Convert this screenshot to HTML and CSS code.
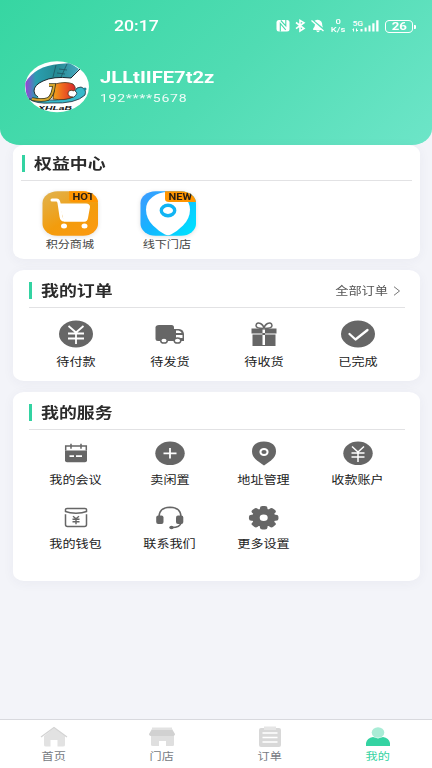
FILE: index.html
```html
<!DOCTYPE html>
<html lang="zh-CN">
<head>
<meta charset="utf-8">
<meta name="viewport" content="width=device-width, initial-scale=1">
<title>我的</title>
<link rel="stylesheet" href="styles.css">
</head>
<body>
<div class="app">
  <header class="hero">
    <div class="status">
      <span class="clock">20:17</span>
      <div class="indicators">
        <svg width="50" height="18" viewBox="275 17 50 18">
          <g fill="#fff">
            <rect x="276.500" y="20" width="13" height="11.500" rx="2.500"/>
            <path d="M313.300 28.300c1.500-1 1.500-2.800 1.800-4.500l7 6.200h-9zM314.500 20.800q4-2.600 6.800.7 1 1.500 1 4.300l.8 2zM316 30.500h4q-1 1.700-2 1.700t-2-1.700z"/>
          </g>
          <path d="M280.300 31.500v-8l5.400 6.300M280.800 20.500l5 5.300V20" fill="none" stroke="#45d9ab" stroke-width="1.100"/>
          <g fill="none" stroke="#fff">
            <path stroke-width="1.600" d="M296 22.500l8 6-4 2.500V20.300l4 2.400-8 6"/>
            <path stroke-width="1.400" d="M311.500 20.500l12 10.500"/>
          </g>
        </svg>
        <div class="speed"><span>0</span><span>K/s</span></div>
        <svg class="signal" width="28" height="18" viewBox="352 17 28 18">
          <text x="352.500" y="26" textLength="10.500" lengthAdjust="spacingAndGlyphs">5G</text>
          <path fill="#fff" d="M360.500 29h2v2.500h-2zM364.600 27.500h2v4h-2zM368.500 25.500h2v6h-2zM372.300 23.300h2.200v8.200h-2.200zM376.200 20.300h2.300v11.200h-2.300z"/>
          <path stroke="#fff" fill="none" d="M353.500 28.500v3M356.500 28.500v3M352.500 29.500h1M356.500 30.500h1.500"/>
        </svg>
        <div class="battery"><span>26</span></div>
      </div>
    </div>
    <div class="profile">
      <svg class="avatar" width="64" height="52" viewBox="0 0 64 52">
        <defs>
          <clipPath id="face"><ellipse cx="32" cy="25.800" rx="32" ry="25.500"/></clipPath>
          <linearGradient id="sea"><stop offset="0" stop-color="#9c3fd8"/><stop offset=".2" stop-color="#2a9fb0"/><stop offset=".6" stop-color="#258a93"/><stop offset="1" stop-color="#48a9c1"/></linearGradient>
          <linearGradient id="rainbow"><stop offset="0" stop-color="#f0a51a"/><stop offset=".4" stop-color="#ef6a1f"/><stop offset="1" stop-color="#d9262b"/></linearGradient>
        </defs>
        <g clip-path="url(#face)">
          <path fill="#fff" d="M0 0h64v52H0z"/>
          <path fill="url(#sea)" d="M0 22Q10 5 34 3l11-1 9 6-8 9q-18-2-28 3-9 4-9 10 0 4 5 7L2 39z"/>
          <path fill="none" stroke="#20545f" stroke-width=".8" d="M31 4l-3 12M42 3l-6 13M34 8l8 1M32 12l8 1"/>
          <path stroke="#1c2930" stroke-width="1" fill="none" d="M55 8l-9 9q-18-2-28 3-9 4-9 10 0 4 4 6"/>
          <path fill="#38b9ca" stroke="#202d39" stroke-width=".8" d="M4 38q7 5 22 4 25 1 34-8 2-6-4-8-5 0-6 4 4 2-1 6-15 5-45 2z"/>
          <path fill="url(#rainbow)" stroke="#49351b" stroke-width=".8" d="M30 23q11-3 18 0 4 4 1 7-5-2-6 2 0 4 5 4-8 4-20 2z"/>
          <path fill="none" stroke="#37351a" stroke-width="3.500" d="M24 24h5q-1 11-6 14-6 2-16 0"/>
          <path fill="none" stroke="#d3a52e" stroke-width="2" d="M24 24h5q-1 11-6 14-6 2-16 0"/>
          <path fill="none" stroke="#fff" stroke-width="1.300" d="M49 31q-4 2-1 4"/>
          <circle cx="60" cy="28" r="1.500" fill="#16899b"/>
          <text class="crest" x="13" y="48.500" textLength="34" lengthAdjust="spacingAndGlyphs">XHLaB</text>
        </g>
      </svg>
      <div class="who">
        <div class="name"><span>JLLtIIFE7t2z</span></div>
        <div class="phone"><span>192****5678</span></div>
      </div>
    </div>
  </header>

  <main>
    <section class="card benefits">
      <div class="head"><h2>权益中心</h2></div>
      <div class="promos">
        <div class="promo">
          <svg width="60" height="50" viewBox="0 0 60 50">
            <defs>
              <linearGradient id="gold" x2=".7" y2="1"><stop stop-color="#dfb453"/><stop offset=".65" stop-color="#f39c0c"/><stop offset="1" stop-color="#fa9a10"/></linearGradient>
              <clipPath id="tile"><rect x="2.500" y="2.300" width="55.500" height="44.500" rx="15" ry="12"/></clipPath>
            </defs>
            <g clip-path="url(#tile)">
              <path fill="url(#gold)" d="M2 1h57v46H2z"/>
              <path fill="#ff9500" d="M29 1h30v12H33q-4 0-4-3z"/>
              <text class="tag" x="32.500" y="10.500" textLength="22" lengthAdjust="spacingAndGlyphs">HOT</text>
            </g>
            <path fill="none" stroke="#fff" stroke-width="3" stroke-linecap="round" stroke-linejoin="round" d="M12 11h4.500q2 0 2.500 3l2 13.500q.5 3.500 3 3.500h21"/>
            <path fill="#fff" d="M19 14.500h27q4 0 4 3.500l-2 11q-.5 3.500-4 3.500H24z"/>
            <ellipse cx="24" cy="37" rx="3" ry="2.500" fill="#fff"/><ellipse cx="44.500" cy="37" rx="3" ry="2.500" fill="#fff"/>
          </svg>
          <span class="label small">积分商城</span>
        </div>
        <div class="promo">
          <svg width="60" height="50" viewBox="0 0 60 50">
            <defs><linearGradient id="sky" y2=".7"><stop stop-color="#4298ff"/><stop offset=".5" stop-color="#14b4ff"/><stop offset="1" stop-color="#00ddff"/></linearGradient></defs>
            <g clip-path="url(#tile)">
              <path fill="url(#sky)" d="M2 1h57v46H2z"/>
              <path fill="#fff" d="M30 3q9 0 15.500 5Q52 13 52 20.500q0 9-7 16-6 6-12 9-3 1.500-6 0-6-3-12-9-7-7-7-16 0-7.500 6.500-12.500T30 3z"/>
              <ellipse cx="30" cy="21.500" rx="6.700" ry="5.200" fill="#fff" stroke="#12b4f3" stroke-width="3.400"/>
              <path fill="#ff9500" d="M27 1h32v12H31q-4 0-4-3z"/>
              <text class="tag" x="30.500" y="10.500" textLength="23.500" lengthAdjust="spacingAndGlyphs">NEW</text>
            </g>
          </svg>
          <span class="label small">线下门店</span>
        </div>
      </div>
    </section>

    <section class="card orders">
      <div class="head">
        <h2>我的订单</h2>
        <a class="all"><span>全部订单</span><svg width="8" height="10" viewBox="0 0 8 10"><path d="M1 .7l5.500 4.300L1 9.300" fill="none" stroke="#777"/></svg></a>
      </div>
      <div class="grid">
        <div class="item">
          <svg width="36" height="28" viewBox="0 0 36 28"><ellipse class="f" cx="18" cy="14" rx="17" ry="13.500"/><path class="w" d="M10.500 6l7.500 6.500L25.500 6M10 13.500h16M10 18.500h16M18 12.500V24"/></svg>
          <span class="label">待付款</span>
        </div>
        <div class="item">
          <svg width="36" height="28" viewBox="0 0 36 28"><path class="f" d="M7 5h12.500q2.500 0 2.500 2.500V21H6q-2.500 0-2.500-2.500v-11Q3.500 5 7 5z"/><path class="f" d="M22 9h5q4.500.5 5 5v7H22z"/><path fill="#fff" d="M24 10.500h2.500q2.500.5 3.200 2.500H24zM24 15h6.500v3H24z"/><path d="M23 14h8" stroke="#666"/><g fill="#fff" stroke="#666" stroke-width="1.500"><ellipse cx="12" cy="20.500" rx="3.300" ry="2.600"/><ellipse cx="25.500" cy="20.500" rx="3.300" ry="2.600"/></g></svg>
          <span class="label">待发货</span>
        </div>
        <div class="item">
          <svg width="36" height="28" viewBox="0 0 36 28"><path class="f" d="M5.500 8.500h11v5h-11zM19 8.500h11.500v5H19zM6.500 14.500h10V26h-10zM19 14.500h10.500V26H19zM16.500 8.500H19v1h-2.500zM16.500 13h2.500v2h-2.500zM16.500 25h2.500v1h-2.500z"/><path d="M17.500 8.500q-7.500 0-7.500-3 .5-3.500 4.500-2 3 1.500 3.500 5 .5-3.500 3.500-5 4-1.500 4.500 2 0 3-7.500 3" fill="none" stroke="#666" stroke-width="1.500"/></svg>
          <span class="label">待收货</span>
        </div>
        <div class="item">
          <svg width="36" height="28" viewBox="0 0 36 28"><ellipse class="f" cx="18" cy="14" rx="17" ry="13.500"/><path d="M9.500 14l6 5.500L27.500 10" fill="none" stroke="#fff" stroke-width="2.300" stroke-linecap="round" stroke-linejoin="round"/></svg>
          <span class="label">已完成</span>
        </div>
      </div>
    </section>

    <section class="card services">
      <div class="head"><h2>我的服务</h2></div>
      <div class="grid">
        <div class="item">
          <svg width="36" height="28" viewBox="0 0 36 28"><path class="f" d="M7 11.500h22v9.700q0 2-2 2H9q-2 0-2-2z"/><path d="M7.700 11.500V7h20.600v4.500M13 4.700v5M23 4.700v5" fill="none" stroke="#666" stroke-width="1.500"/><path d="M11.500 17.200h4.500M18 17.200h6" stroke="#fff" stroke-width="1.700"/></svg>
          <span class="label">我的会议</span>
        </div>
        <div class="item">
          <svg width="36" height="28" viewBox="0 0 36 28"><ellipse class="f" cx="18" cy="14.300" rx="14.700" ry="11.800"/><path class="w" d="M11.500 14.300h13M18 9v10.600"/></svg>
          <span class="label">卖闲置</span>
        </div>
        <div class="item">
          <svg width="36" height="28" viewBox="0 0 36 28"><path class="f" d="M18 2.500q12 .5 12 10 0 5-5 9-4 3-7 5-3-2-7-5-5-4-5-9 0-9.500 12-10z"/><ellipse cx="18" cy="13" rx="3.600" ry="3" fill="none" stroke="#fff" stroke-width="2"/></svg>
          <span class="label">地址管理</span>
        </div>
        <div class="item">
          <svg width="36" height="28" viewBox="0 0 36 28"><ellipse class="f" cx="18" cy="14.300" rx="14.700" ry="11.800"/><path class="w thin" d="M12 7.500l6 5.500 6-5.500M11.500 14h13M11.500 18h13M18 13V23"/></svg>
          <span class="label">收款账户</span>
        </div>
        <div class="item">
          <svg width="36" height="28" viewBox="0 0 36 28"><g transform="translate(0 .7)" fill="none" stroke="#666" stroke-width="1.500"><path d="M9 4.800h18q1.500 0 1.500 1v2q-4 1.700-10.500 1.700T7.500 7.800v-2q0-1 1.500-1zM7.500 10.500v10.200q0 2 2 2h17q2 0 2-2V10.500"/><path d="M15 12.500l3 2.500 3-2.500M14.500 15.500h7M14.500 18h7M18 15v5.500" stroke-width="1.400"/></g></svg>
          <span class="label">我的钱包</span>
        </div>
        <div class="item">
          <svg width="36" height="28" viewBox="0 0 36 28"><g transform="translate(0 .5)"><path d="M7 13.500q0-9.500 11-9.700 11 .2 11 9.700v6q-1 4.500-9 4.500" fill="none" stroke="#666" stroke-width="1.500"/><rect class="f" x="4.200" y="12" width="7.300" height="8.500" rx="2"/><rect class="f" x="24" y="12" width="7.300" height="8.500" rx="2"/><ellipse class="f" cx="19.500" cy="24" rx="2.200" ry="1.700"/></g></svg>
          <span class="label">联系我们</span>
        </div>
        <div class="item">
          <svg width="36" height="28" viewBox="0 0 36 28"><g transform="translate(17.700 14.700) scale(1.250 1)"><circle class="f" r="9.300"/><g class="f"><rect id="tooth" x="-3" y="-11.800" width="6" height="23.600" rx="2"/><use href="#tooth" transform="rotate(45)"/><use href="#tooth" transform="rotate(90)"/><use href="#tooth" transform="rotate(135)"/></g><circle r="3.200" fill="#fff"/></g></svg>
          <span class="label">更多设置</span>
        </div>
      </div>
    </section>
  </main>

  <nav class="tabs">
    <div class="tab">
      <svg width="28" height="22" viewBox="0 0 28 22"><path fill="#e2e2e2" d="M14 2L4 10v9q0 1.500 2 1.500h4.500V14h7v6.500H23q2 0 2-1.500v-9z"/><path d="M1 11L14 1.500 27 11" fill="none" stroke="#d3d3d3" stroke-width="1.300"/></svg>
      <span class="label small">首页</span>
    </div>
    <div class="tab">
      <svg width="28" height="22" viewBox="0 0 28 22"><path fill="#dfdfdf" d="M3 8h23v11q0 1-1.500 1H18v-5h-7v5H5q-2 0-2-1z"/><path fill="#d1d1d1" d="M4 3h20l3 5q0 2-3 2H4Q1 10 1 8z"/><path fill="#e2e2e2" d="M4 1.500h20V4H4z"/></svg>
      <span class="label small">门店</span>
    </div>
    <div class="tab">
      <svg width="28" height="22" viewBox="0 0 28 22"><rect x="3" y="2" width="22" height="19" rx="2" fill="#d8d8d8"/><path fill="#e5e5e5" d="M8 .5h12V4H8z"/><path d="M6.500 7h15M6.500 11.500h15M6.500 16h15" stroke="#fff" stroke-width="1.700"/></svg>
      <span class="label small">订单</span>
    </div>
    <div class="tab active">
      <svg width="28" height="22" viewBox="0 0 28 22"><ellipse cx="14" cy="6.500" rx="6.300" ry="5.300" fill="#a9ecd6"/><path fill="#34d3a2" d="M2 20v-3q1-5 7-6l5 1.500 5-1.500q6 1 7 6v3z"/></svg>
      <span class="label small">我的</span>
    </div>
  </nav>
</div>
</body>
</html>
```
FILE: styles.css
```css
* { box-sizing: border-box; }

body {
  margin: 0;
  font-family: Roboto, "Noto Sans CJK SC", sans-serif;
  color: #333;
  background: #f3f4f9;
}

svg { display: block; flex: none; }

.app {
  width: 432px;
  height: 768px;
  display: flex;
  flex-direction: column;
  overflow: hidden;
}

.hero {
  height: 145px;
  flex: none;
  padding-top: 17px;
  color: #fff;
  background: linear-gradient(135deg, #36d6a2 0%, #50dcb3 52%, #6de5c8 100%);
  border-radius: 0 0 20px 20px / 0 0 16px 16px;
}

.status {
  display: flex;
  justify-content: space-between;
  height: 18px;
  padding: 0 19px 0 114px;
}

.clock {
  font-size: 15.5px;
  line-height: 18px;
  font-weight: 500;
  transform: scaleX(1.14);
  transform-origin: left;
}

.indicators { display: flex; align-items: center; }

.speed {
  display: flex;
  flex-direction: column;
  align-items: center;
  width: 27px;
  font-size: 7.9px;
  line-height: 8px;
  font-weight: 500;
}

.speed span { transform: scaleX(1.2); }

.signal text {
  font: 500 8px Roboto, sans-serif;
  fill: #fff;
}

.battery {
  position: relative;
  display: flex;
  align-items: center;
  justify-content: center;
  width: 28px;
  height: 13px;
  margin-left: 5px;
  border: 1px solid #fff;
  border-radius: 4.5px / 4px;
  font-size: 11px;
  line-height: 11px;
  font-weight: 700;
}

.battery span { transform: scaleX(1.2); }

.battery::after {
  content: "";
  position: absolute;
  right: -3.5px;
  top: 4px;
  width: 1.5px;
  height: 4px;
  border-radius: 0 1px 1px 0;
  background: #fff;
}

.profile {
  display: flex;
  padding: 26px 0 0 25px;
}

.crest {
  font: italic 700 5px "Liberation Sans", sans-serif;
  fill: #111;
}

.who { padding: 7px 0 0 11px; }
.who span { display: inline-block; transform-origin: left; }

.name {
  font-size: 16px;
  line-height: 20px;
  font-weight: 700;
}

.name span { transform: scaleX(1.26); }

.phone {
  font-size: 11.8px;
  line-height: 21px;
  opacity: .9;
}

.phone span { transform: scaleX(1.19); letter-spacing: .6px; }

main { padding: 0 12px 0 13px; flex: 1; }

.card {
  background: #fff;
  border-radius: 11px / 9px;
  margin-bottom: 11px;
  padding: 0 15px 0 16px;
  box-shadow: 0 2px 12px rgba(60, 65, 90, .05);
}

.benefits { height: 114px; padding: 0 8px; }
.orders { height: 111px; }
.services { height: 189px; }

.head {
  display: flex;
  align-items: center;
  height: 38px;
  padding-top: 3px;
  border-bottom: 1px solid #e2e2e4;
}

.benefits .head { height: 36px; padding-top: 1px; }

.head::before {
  content: "";
  width: 2.5px;
  height: 17px;
  background: #33d3a2;
}

.benefits .head::before { margin-left: 1px; }

h2 {
  margin: 3px 0 0 9px;
  font-size: 14.5px;
  line-height: 20px;
  font-weight: 700;
  color: #2b2b2b;
  transform: scaleX(1.235);
  transform-origin: left;
}

.all {
  display: flex;
  align-items: center;
  gap: 5px;
  margin-left: auto;
  padding-right: 4px;
  font-size: 11px;
  line-height: 18px;
  color: #555;
}

.all span { margin-top: 3px; transform: scaleX(1.2); transform-origin: right; }
.all svg { margin-top: 2px; }

.promos { display: flex; padding: 8px 0 0 19px; gap: 37.5px; }

.promo, .item, .tab {
  display: flex;
  flex-direction: column;
  align-items: center;
}

.promo svg { filter: drop-shadow(0 1px 2px rgba(0, 0, 0, .12)); }

.tag {
  font: 700 8.8px Roboto, sans-serif;
  fill: #2b2013;
}

.label {
  font-size: 11px;
  line-height: 16px;
  color: #222;
  transform: translateX(-.5px) scaleX(1.19);
  white-space: nowrap;
}

.label.small { font-size: 10.2px; color: #444; }

.promo .label { margin-top: -1px; line-height: 14px; }

.grid {
  display: grid;
  grid-template-columns: repeat(4, 1fr);
  padding-top: 12px;
}

.item .label { margin-top: 7px; }

.services .grid { padding-top: 9px; row-gap: 14px; }
.services .item .label { margin-top: 6px; }

.f { fill: #666; }
.w { fill: none; stroke: #fff; stroke-width: 1.8; }
.thin { stroke-width: 1.5; }

.tabs {
  display: grid;
  grid-template-columns: repeat(4, 1fr);
  height: 49px;
  flex: none;
  padding-top: 6px;
  background: #fff;
  border-top: 1px solid #d8d9de;
}

.tabs .label { color: #777b83; line-height: 16px; margin-top: 1px; }
.tabs .active .label { color: #34d3a2; }
```
